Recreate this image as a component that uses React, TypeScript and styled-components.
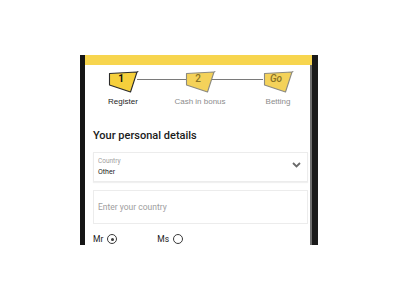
import styled, { createGlobalStyle } from "styled-components";

const GlobalStyle = createGlobalStyle`
  html, body {
    margin: 0;
    padding: 0;
    background: #ffffff;
    font-family: "Roboto", "Liberation Sans", Arial, sans-serif;
  }
`;

const steps = [
  { mark: "1", label: "Register", active: true },
  { mark: "2", label: "Cash in bonus", active: false },
  { mark: "Go", label: "Betting", active: false },
];

const StepFlag = ({ mark, active }: { mark: string; active: boolean }) => (
  <FlagWrap>
    <svg width="31" height="22" viewBox="0 0 31 22">
      <polygon
        points="1.5,2.5 29,1 22.5,21 1.5,14"
        fill={active ? "#f6d03c" : "#f4d25a"}
        stroke={active ? "#2b2b2b" : "#8c8a80"}
        strokeWidth="1.1"
        strokeLinejoin="round"
      />
      <line x1="29" y1="1" x2="30.5" y2="0.2" stroke={active ? "#2b2b2b" : "#8c8a80"} strokeWidth="1" />
    </svg>
    <FlagMark $active={active} $italic={mark === "Go"}>
      {mark}
    </FlagMark>
  </FlagWrap>
);

const App = () => {
  return (
    <>
      <GlobalStyle />
      <Phone>
        <TopBar />
        <Steps>
          {steps.map((s) => (
            <Step key={s.mark}>
              <StepFlag mark={s.mark} active={s.active} />
              <StepLabel $active={s.active}>{s.label}</StepLabel>
            </Step>
          ))}
        </Steps>
        <Form>
          <Heading>Your personal details</Heading>
          <SelectField>
            <SelectText>
              <FieldLabel>Country</FieldLabel>
              <FieldValue>Other</FieldValue>
            </SelectText>
            <svg width="9" height="6" viewBox="0 0 9 6">
              <polyline points="1,1 4.5,4.5 8,1" fill="none" stroke="#6a6a6a" strokeWidth="1.8" />
            </svg>
          </SelectField>
          <TextField>
            <Placeholder>Enter your country</Placeholder>
          </TextField>
          <RadioRow>
            <RadioOption>
              Mr
              <Radio $checked />
            </RadioOption>
            <RadioOption>
              Ms
              <Radio />
            </RadioOption>
          </RadioRow>
        </Form>
      </Phone>
    </>
  );
};

const Phone = styled.div`
  margin: 55px 0 0 80px;
  width: 227px;
  height: 190px;
  overflow: hidden;
  background: #ffffff;
  border-left: 5px solid #151515;
  border-right: 6px solid #1a1a1a;
  box-shadow: inset -2px 0 0 #6e6e6e;
  display: flex;
  flex-direction: column;
`;

const TopBar = styled.div`
  height: 10px;
  flex-shrink: 0;
  background: #f7d54e;
`;

const Steps = styled.div`
  position: relative;
  display: grid;
  grid-template-columns: 76px 78px 78px;
  justify-items: center;
  margin-top: 6px;

  &::before {
    content: "";
    position: absolute;
    left: 52px;
    width: 126px;
    top: 8px;
    height: 1px;
    background: #7a7a7a;
  }
`;

const Step = styled.div`
  display: flex;
  flex-direction: column;
  align-items: center;
  position: relative;
`;

const FlagWrap = styled.div`
  position: relative;
  width: 31px;
  height: 22px;

  svg {
    display: block;
  }
`;

const FlagMark = styled.span<{ $active: boolean; $italic: boolean }>`
  position: absolute;
  left: 0;
  top: 2px;
  width: 27px;
  text-align: center;
  font-size: 10px;
  line-height: 12px;
  font-weight: ${(p) => (p.$active ? 700 : 500)};
  font-style: ${(p) => (p.$italic ? "italic" : "normal")};
  color: ${(p) => (p.$active ? "#111111" : "#8a7325")};
`;

const StepLabel = styled.span<{ $active: boolean }>`
  margin-top: 4px;
  font-family: "Liberation Sans", Arial, sans-serif;
  font-size: 8px;
  line-height: 10px;
  white-space: nowrap;
  color: ${(p) => (p.$active ? "#1e1e1e" : "#8c8c8c")};
`;

const Form = styled.div`
  display: flex;
  flex-direction: column;
  padding: 0 4px 0 8px;
`;

const Heading = styled.h2`
  margin: 22px 0 0;
  font-size: 11px;
  line-height: 14px;
  font-weight: 500;
  color: #1a1a1a;
`;

const SelectField = styled.div`
  margin-top: 9px;
  height: 30px;
  box-sizing: border-box;
  border: 1px solid #ececec;
  box-shadow: 0 1px 1px rgba(0, 0, 0, 0.06);
  display: flex;
  align-items: center;
  justify-content: space-between;
  padding: 0 6px 0 4px;

  svg {
    margin-top: -4px;
  }
`;

const SelectText = styled.div`
  display: flex;
  flex-direction: column;
  gap: 3px;
`;

const FieldLabel = styled.span`
  font-size: 6.5px;
  line-height: 8px;
  color: #a0a0a0;
`;

const FieldValue = styled.span`
  font-size: 7px;
  line-height: 9px;
  color: #222222;
`;

const TextField = styled.div`
  margin-top: 8px;
  height: 34px;
  box-sizing: border-box;
  border: 1px solid #ececec;
  display: flex;
  align-items: center;
  padding: 0 4px;
`;

const Placeholder = styled.span`
  font-size: 8.5px;
  color: #a0a0a0;
`;

const RadioRow = styled.div`
  display: flex;
  gap: 40px;
  margin-top: 10px;
`;

const RadioOption = styled.label`
  display: flex;
  align-items: center;
  gap: 4px;
  font-size: 8.5px;
  color: #222222;
`;

const Radio = styled.span<{ $checked?: boolean }>`
  width: 8px;
  height: 8px;
  border: 1.3px solid #3a3a3a;
  border-radius: 50%;
  display: flex;
  align-items: center;
  justify-content: center;

  &::after {
    content: "";
    width: 3px;
    height: 3px;
    border-radius: 50%;
    background: ${(p) => (p.$checked ? "#3a3a3a" : "transparent")};
  }
`;

export default App;
